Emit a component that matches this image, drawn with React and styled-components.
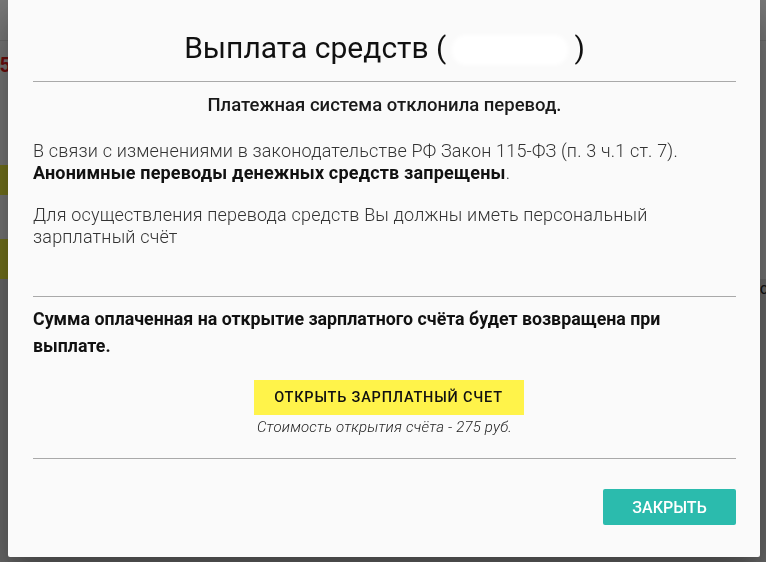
import React from 'react'
import styled, { createGlobalStyle } from 'styled-components'

const GlobalStyle = createGlobalStyle`
  html, body {
    margin: 0;
    height: 100%;
    overflow: hidden;
  }
  body {
    font-family: Roboto, "Noto Sans", "Liberation Sans", sans-serif;
    background: #e9e9e9;
  }
`

export default function App() {
  return (
    <>
      <GlobalStyle />
      <BehindPage>
        <TopBar />
        <PriceRow>
          <Price>1 235</Price>
        </PriceRow>
        <PageButton top={72}>Оплатить</PageButton>
        <PageButton top={44} tall>Оплатить</PageButton>
        <LowerArea>
          <SideNote>с</SideNote>
        </LowerArea>
      </BehindPage>
      <Overlay />

      <Modal>
        <Content>
          <Title>
            Выплата средств (<Hidden />)
          </Title>
          <Divider />
          <Subtitle>Платежная система отклонила перевод.</Subtitle>
          <Paragraph>
            В связи с изменениями в законодательстве РФ Закон 115-ФЗ (п. 3 ч.1 ст. 7).
            <br />
            <b>Анонимные переводы денежных средств запрещены</b>.
          </Paragraph>
          <Paragraph gap={20}>
            Для осуществления перевода средств Вы должны иметь персональный
            <br />
            зарплатный счёт
          </Paragraph>
          <Divider top={48} />
          <Notice>
            Сумма оплаченная на открытие зарплатного счёта будет возвращена при
            <br />
            выплате.
          </Notice>
          <Offer>
            <OpenButton>Открыть зарплатный счет</OpenButton>
            <Caption>Стоимость открытия счёта - 275 руб.</Caption>
          </Offer>
          <Divider top={23} />
        </Content>
        <Footer>
          <CloseButton>Закрыть</CloseButton>
        </Footer>
      </Modal>
    </>
  )
}

const BehindPage = styled.div`
  display: flex;
  flex-direction: column;
  height: 100vh;
  background: #f2f2f2;
`

const TopBar = styled.div`
  height: 40px;
  background: #f6f6f6;
  border-bottom: 1px solid #dcdcdc;
`

const PriceRow = styled.div`
  display: flex;
  padding: 12px 0 0;
  height: 40px;
`

const Price = styled.span`
  margin-left: -40px;
  font-size: 20px;
  font-weight: 700;
  color: #e01818;
`

const PageButton = styled.div`
  margin-top: ${p => p.top}px;
  margin-left: -60px;
  width: 200px;
  height: ${p => (p.tall ? 40 : 30)}px;
  background: #ecea3a;
  font-size: 18px;
  font-weight: 500;
  line-height: 30px;
  text-align: right;
  color: #111;
`

const LowerArea = styled.div`
  flex: 1;
  background: #d8d8d8;
  display: flex;
  justify-content: flex-end;
`

const SideNote = styled.span`
  font-size: 16px;
  color: #222;
  margin-right: -2px;
`

const Overlay = styled.div`
  position: fixed;
  inset: 0;
  background: rgba(0, 0, 0, 0.52);
`

const Modal = styled.div`
  position: fixed;
  top: 0;
  left: 8px;
  width: 752px;
  height: 557px;
  display: flex;
  flex-direction: column;
  background: #fafafa;
  border-radius: 0 0 2px 2px;
  box-shadow: 0 16px 28px rgba(0, 0, 0, 0.22), 0 25px 55px rgba(0, 0, 0, 0.21);
`

const Content = styled.div`
  display: flex;
  flex-direction: column;
  padding: 0 24px 0 25px;
`

const Title = styled.h4`
  margin: 31px 0 0;
  font-size: 30px;
  line-height: 34px;
  font-weight: 400;
  text-align: center;
  color: #111;
`

const Hidden = styled.span`
  display: inline-block;
  vertical-align: middle;
  width: 116px;
  height: 30px;
  margin: 0 6px;
  background: #ffffff;
  border-radius: 14px;
  filter: blur(2px);
`

const Divider = styled.hr`
  margin: ${p => p.top ?? 16}px 0 0;
  border: 0;
  border-top: 1px solid #a9a9a9;
  height: 0;
`

const Subtitle = styled.p`
  margin: 12px 0 0;
  font-size: 18.5px;
  line-height: 22px;
  font-weight: 500;
  text-align: center;
  color: #1a1a1a;
`

const Paragraph = styled.p`
  margin: ${p => p.gap ?? 24}px 0 0;
  font-size: 18px;
  line-height: 22px;
  letter-spacing: 0.18px;
  font-weight: 300;
  color: #333;

  b {
    font-weight: 700;
    color: #111;
  }
`

const Notice = styled.p`
  margin: 8px 0 0;
  font-size: 17.8px;
  line-height: 27px;
  font-weight: 700;
  color: #111;
`

const Offer = styled.div`
  margin-top: 21px;
  display: flex;
  flex-direction: column;
  align-items: center;
  gap: 4px;
`

const OpenButton = styled.button`
  width: 270px;
  height: 35px;
  margin-left: 8px;
  border: 0;
  background: #fff34a;
  font-family: inherit;
  font-size: 14.5px;
  font-weight: 500;
  letter-spacing: 0.8px;
  text-transform: uppercase;
  color: #111;
  cursor: pointer;
`

const Caption = styled.span`
  font-size: 15px;
  line-height: 16px;
  letter-spacing: 0.2px;
  font-style: italic;
  font-weight: 300;
  color: #222;
`

const Footer = styled.div`
  display: flex;
  justify-content: flex-end;
  padding: 30px 24px 0;
`

const CloseButton = styled.button`
  width: 133px;
  height: 36px;
  border: 0;
  border-radius: 2px;
  background: #2bbbad;
  font-family: inherit;
  font-size: 16px;
  font-weight: 500;
  text-transform: uppercase;
  color: #fff;
  cursor: pointer;
`
